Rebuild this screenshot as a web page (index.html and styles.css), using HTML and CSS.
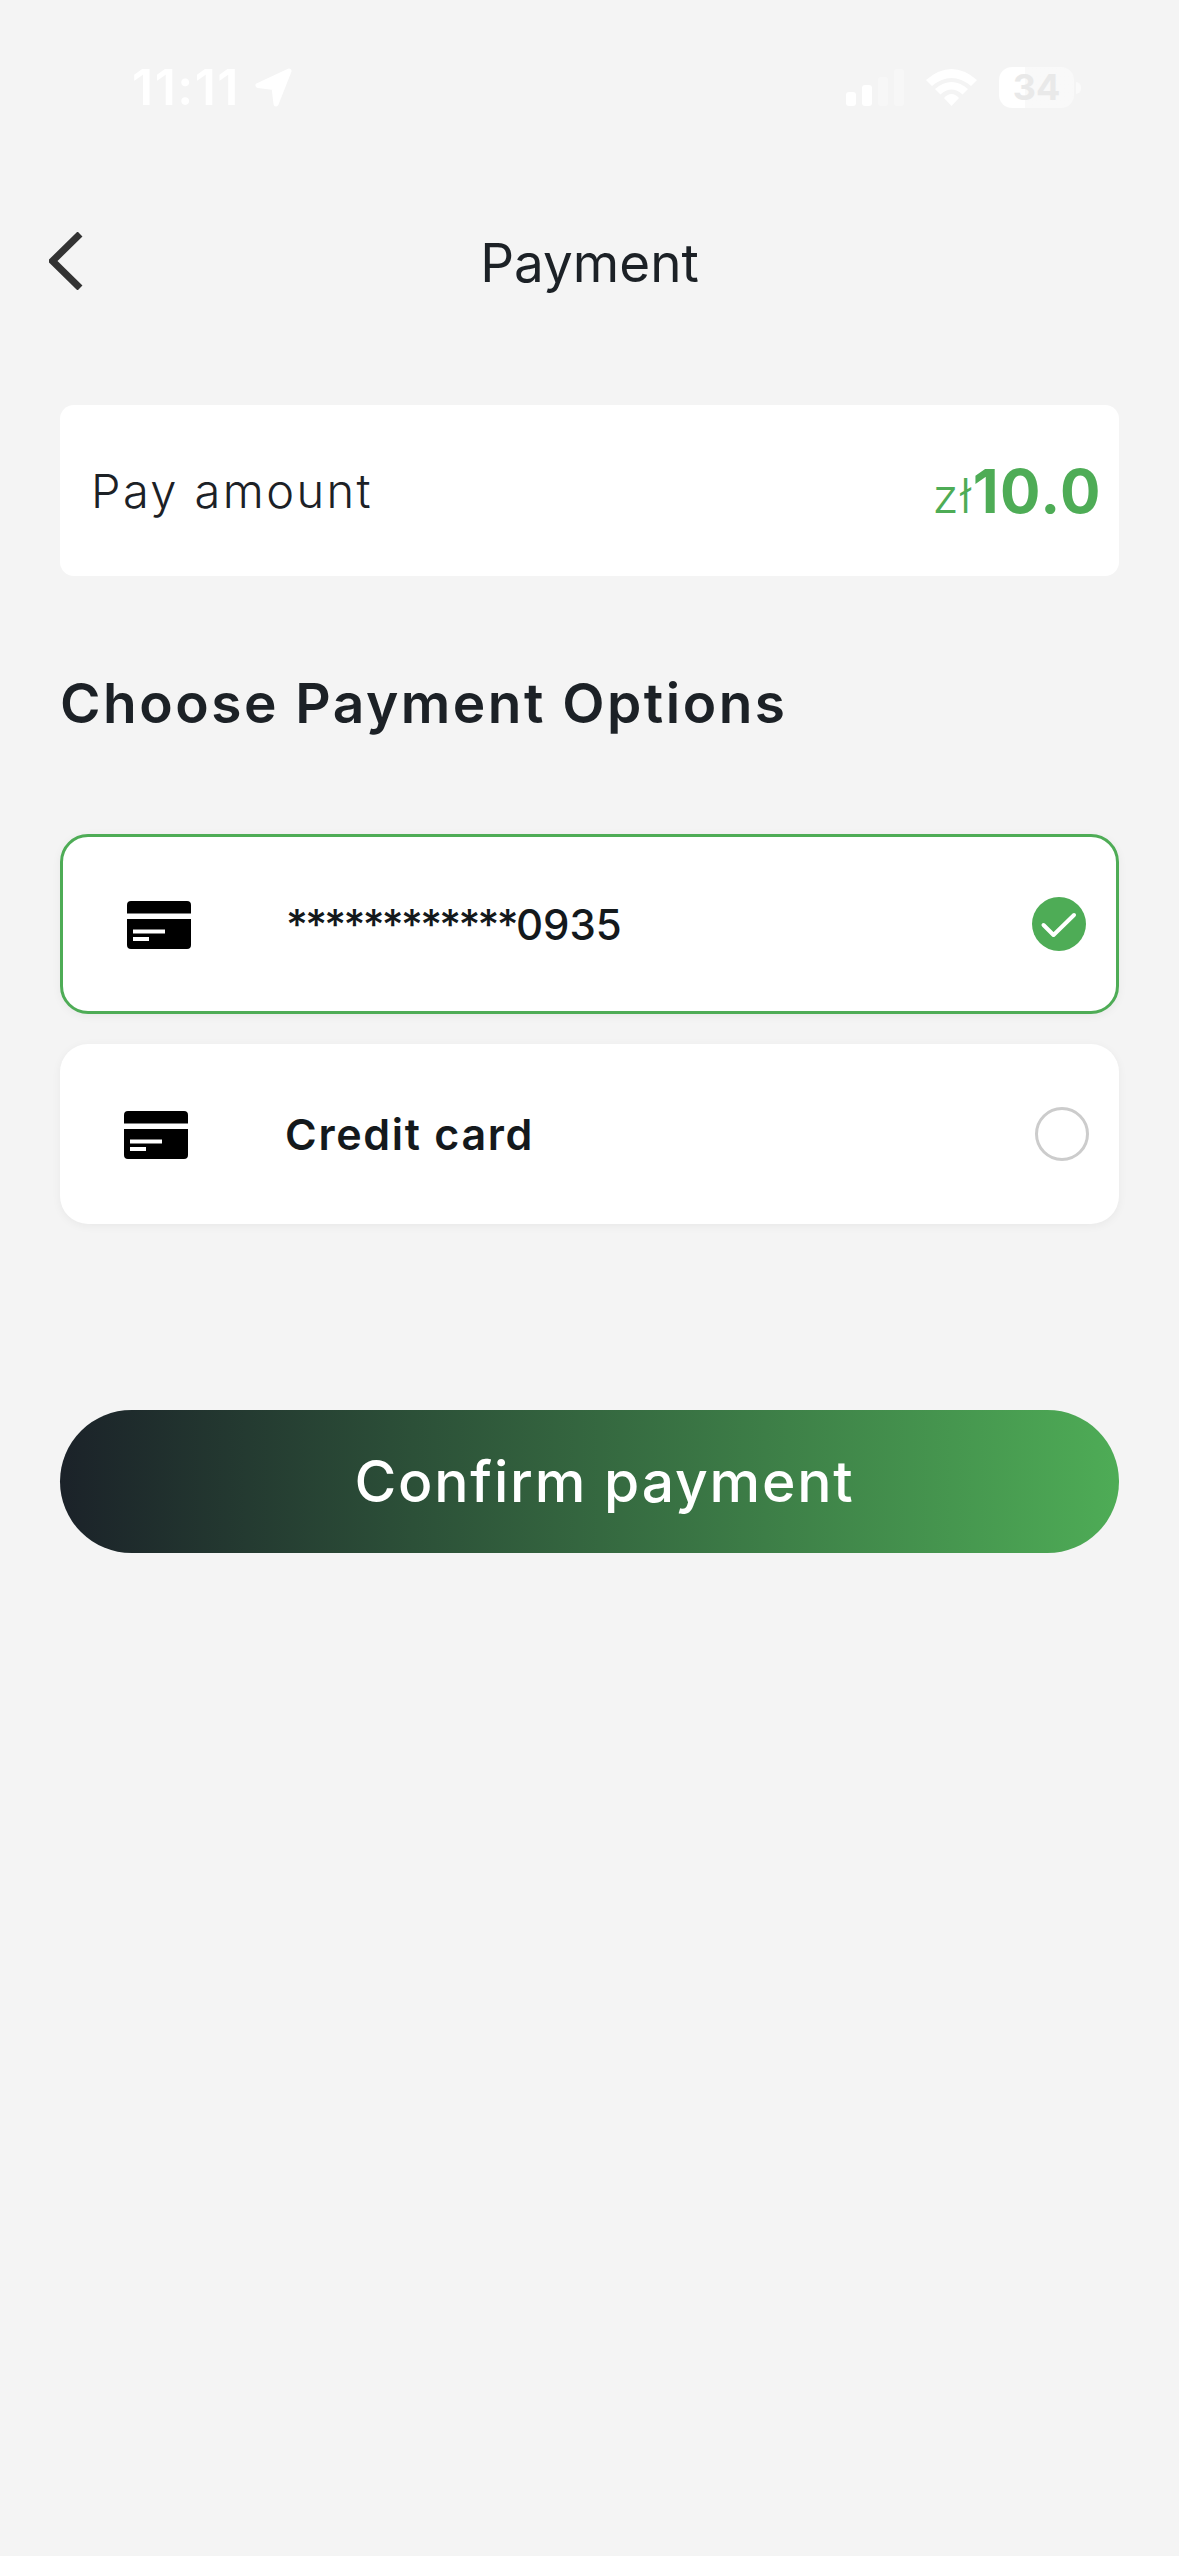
FILE: index.html
```html
<!DOCTYPE html>
<html lang="en">
<head>
  <meta charset="UTF-8">
  <meta name="viewport" content="width=device-width, initial-scale=1.0">
  <title>Payment</title>
  <link rel="stylesheet" href="styles.css">
</head>
<body>
  <div class="status-bar">
    <div class="status-left">
      <span class="time">11:11</span>
      <svg class="location" width="40" height="40" viewBox="0 0 40 40"><path d="M36 3 5 17.500 21 19.500 23 36Z" fill="#fff" stroke="#fff" stroke-width="5" stroke-linejoin="round"/></svg>
    </div>
    <div class="status-right">
      <svg class="signal" width="58" height="37" viewBox="0 0 58 37">
        <rect x="0" y="23" width="10" height="14" rx="3" fill="#fff"/>
        <rect x="16" y="16" width="10" height="21" rx="3" fill="#fff"/>
        <rect x="32" y="8" width="10" height="29" rx="3" fill="#fff" fill-opacity="0.3"/>
        <rect x="48" y="0" width="10" height="37" rx="3" fill="#fff" fill-opacity="0.3"/>
      </svg>
      <svg class="wifi" width="51" height="37" viewBox="0 0 51 37">
        <path d="M0 11Q25.500-11 51 11L45 17Q25.500 1 6 17Z" fill="#fff"/>
        <path d="M9 20Q25.500 6 42 20L36.500 25.500Q25.500 15.500 14.500 25.500Z" fill="#fff"/>
        <path d="M18 29Q25.500 21 33 29L25.500 37Z" fill="#fff"/>
      </svg>
      <div class="battery"><span class="battery-level">34</span><span class="battery-cap"></span></div>
    </div>
  </div>

  <div class="header">
    <button class="back-btn" type="button">
      <svg width="34" height="58" viewBox="0 0 34 58"><path d="M31 2 3.500 29 31 56" fill="none" stroke="#333" stroke-width="7"/></svg>
    </button>
    <h1>Payment</h1>
  </div>

  <div class="amount-card">
    <span class="amount-label">Pay amount</span>
    <span class="amount-value"><span class="currency">zł</span>10.0</span>
  </div>

  <h2>Choose Payment Options</h2>

  <div class="option selected">
    <svg class="card-icon" width="64" height="48" viewBox="0 0 64 48"><path d="M4 0H60A4 4 0 0 1 64 4V12.500H0V4A4 4 0 0 1 4 0ZM0 18H64V44A4 4 0 0 1 60 48H4A4 4 0 0 1 0 44Z"/><rect x="6" y="28.500" width="32" height="4" fill="#fff"/><rect x="6" y="36" width="16" height="4" fill="#fff"/></svg>
    <span class="option-name card-number"><span class="mask">************</span>0935</span>
    <span class="check">
      <svg width="54" height="54" viewBox="0 0 54 54"><path d="M11.500 28 21.500 38 42 18" fill="none" stroke="#fff" stroke-width="4" stroke-linecap="round" stroke-linejoin="round"/></svg>
    </span>
  </div>

  <div class="option">
    <svg class="card-icon" width="64" height="48" viewBox="0 0 64 48"><path d="M4 0H60A4 4 0 0 1 64 4V12.500H0V4A4 4 0 0 1 4 0ZM0 18H64V44A4 4 0 0 1 60 48H4A4 4 0 0 1 0 44Z"/><rect x="6" y="28.500" width="32" height="4" fill="#fff"/><rect x="6" y="36" width="16" height="4" fill="#fff"/></svg>
    <span class="option-name">Credit card</span>
    <span class="radio"></span>
  </div>

  <button class="confirm-btn" type="button">Confirm payment</button>
</body>
</html>
```

FILE: styles.css
```css
body {
  font-family: 'Inter', 'Liberation Sans', sans-serif;
  background-color: #f4f4f4;
  color: #1c2126;
  margin: 0;
  height: 2556px;
  overflow: hidden;
}
.status-bar {
  display: flex;
  justify-content: space-between;
  align-items: center;
  height: 41px;
  padding: 67px 105px 0 132px;
  color: #fff;
}
.status-left {
  display: flex;
  align-items: center;
  gap: 13px;
}
.time {
  font-size: 50px;
  font-weight: 600;
  line-height: 41px;
  letter-spacing: 1.5px;
}
.status-right {
  display: flex;
  align-items: center;
  gap: 22px;
}
.battery {
  position: relative;
  width: 75px;
  height: 41px;
  border-radius: 13px;
  background: linear-gradient(90deg, #fff 35%, rgba(255, 255, 255, 0.45) 35%);
  color: #e9e9e9;
  font-size: 36px;
  font-weight: 700;
  line-height: 41px;
  text-align: center;
}
.battery-cap {
  position: absolute;
  top: 15px;
  right: -7px;
  width: 5px;
  height: 12px;
  border-radius: 0 6px 6px 0;
  background: rgba(255, 255, 255, 0.5);
}
.header {
  display: grid;
  grid-template-columns: 1fr auto 1fr;
  align-items: center;
  margin-top: 124px;
  padding-left: 49px;
  padding-right: 49px;
}
.back-btn {
  display: flex;
  justify-self: start;
  padding: 0;
  background: none;
  border: none;
}
h1 {
  margin: 2px 0 -2px;
  font-size: 53px;
  font-weight: 400;
  line-height: 58px;
}
.amount-card {
  display: flex;
  justify-content: space-between;
  align-items: center;
  height: 171px;
  margin: 115px 60px 0;
  padding: 0 17px 0 31px;
  background: #fff;
  border-radius: 14px;
}
.amount-label {
  font-size: 47px;
  font-weight: 300;
  letter-spacing: 2.4px;
}
.amount-value {
  color: #4eac56;
  font-size: 60px;
  font-weight: 700;
  letter-spacing: 1.5px;
}
.currency {
  font-size: 48px;
  font-weight: 300;
  letter-spacing: 1.5px;
}
h2 {
  margin: 95px 60px 0;
  font-size: 55px;
  font-weight: 600;
  line-height: 64px;
  letter-spacing: 2.5px;
}
.option {
  display: flex;
  align-items: center;
  box-sizing: border-box;
  height: 180px;
  margin: 30px 60px 0;
  padding: 0 30px 0 64px;
  background: #fff;
  border-radius: 28px;
  box-shadow: 0 2px 10px rgba(0, 0, 0, 0.05);
}
.selected {
  margin-top: 99px;
  border: 3px solid #4eac56;
}
.card-icon {
  margin-top: 2px;
}
.option-name {
  flex-grow: 1;
  margin-left: 97px;
  color: #14191c;
  font-size: 43px;
  font-weight: 600;
  letter-spacing: 1.7px;
}
.card-number {
  margin-left: 95px;
  font-size: 42px;
  font-weight: 500;
  letter-spacing: 0;
}
.mask {
  letter-spacing: -2.7px;
}
.check {
  display: flex;
  width: 54px;
  height: 54px;
  background: #4eac56;
  border-radius: 50%;
}
.radio {
  box-sizing: border-box;
  width: 54px;
  height: 54px;
  border: 3px solid #ccc;
  border-radius: 50%;
}
.confirm-btn {
  display: block;
  width: 1059px;
  height: 143px;
  margin: 186px 60px 0;
  padding: 0 0 0 30px;
  color: #fff;
  background: linear-gradient(90deg, #1b2229, #4eac56);
  border: none;
  border-radius: 72px;
  font-family: inherit;
  font-size: 57px;
  font-weight: 500;
  letter-spacing: 1.8px;
}
```
